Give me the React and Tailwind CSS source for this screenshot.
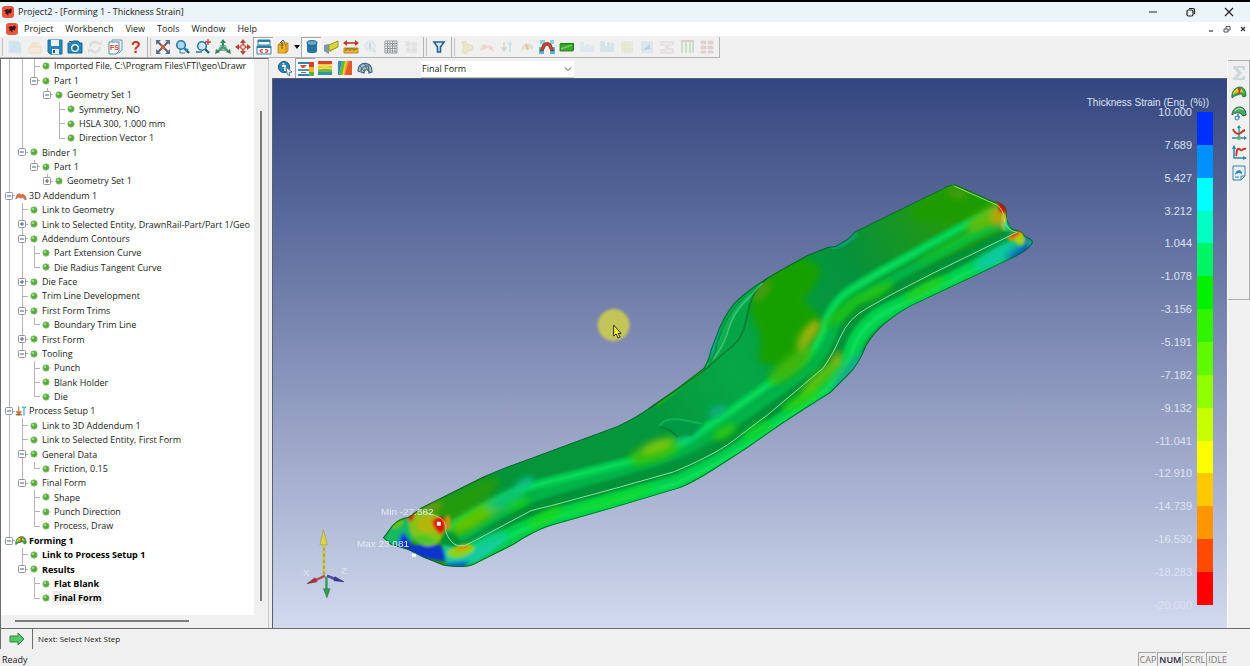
import { useState } from 'react';

const treeRows = [
  { d: 2, label: 'Imported File, C:\\Program Files\\FTI\\geo\\Drawr' },
  { d: 2, box: '-', label: 'Part 1' },
  { d: 3, box: '-', label: 'Geometry Set 1' },
  { d: 4, label: 'Symmetry, NO' },
  { d: 4, label: 'HSLA 300, 1.000 mm' },
  { d: 4, label: 'Direction Vector 1' },
  { d: 1, box: '-', label: 'Binder 1' },
  { d: 2, box: '-', label: 'Part 1' },
  { d: 3, box: '+', label: 'Geometry Set 1' },
  { d: 0, box: '-', icon: 'addendum', label: '3D Addendum 1' },
  { d: 1, label: 'Link to Geometry' },
  { d: 1, box: '+', label: 'Link to Selected Entity, DrawnRail-Part/Part 1/Geo' },
  { d: 1, box: '-', label: 'Addendum Contours' },
  { d: 2, label: 'Part Extension Curve' },
  { d: 2, label: 'Die Radius Tangent Curve' },
  { d: 1, box: '+', label: 'Die Face' },
  { d: 1, label: 'Trim Line Development' },
  { d: 1, box: '-', label: 'First Form Trims' },
  { d: 2, label: 'Boundary Trim Line' },
  { d: 1, box: '+', label: 'First Form' },
  { d: 1, box: '-', label: 'Tooling' },
  { d: 2, label: 'Punch' },
  { d: 2, label: 'Blank Holder' },
  { d: 2, label: 'Die' },
  { d: 0, box: '-', icon: 'process', label: 'Process Setup 1' },
  { d: 1, label: 'Link to 3D Addendum 1' },
  { d: 1, label: 'Link to Selected Entity, First Form' },
  { d: 1, box: '-', label: 'General Data' },
  { d: 2, label: 'Friction, 0.15' },
  { d: 1, box: '-', label: 'Final Form' },
  { d: 2, label: 'Shape' },
  { d: 2, label: 'Punch Direction' },
  { d: 2, label: 'Process, Draw' },
  { d: 0, box: '-', icon: 'forming', label: 'Forming 1', bold: true },
  { d: 1, label: 'Link to Process Setup 1', bold: true },
  { d: 1, box: '-', label: 'Results', bold: true },
  { d: 2, label: 'Flat Blank', bold: true },
  { d: 2, label: 'Final Form', bold: true },
];

const legendLabels = [
  '10.000', '7.689', '5.427', '3.212', '1.044', '-1.078', '-3.156', '-5.191',
  '-7.182', '-9.132', '-11.041', '-12.910', '-14.739', '-16.530', '-18.283', '-20.000',
];

const legendColors = [
  'bg-[#0030ff]', 'bg-[#0090ff]', 'bg-[#00ffff]', 'bg-[#00ffc0]', 'bg-[#00f464]',
  'bg-[#00f000]', 'bg-[#30f400]', 'bg-[#60fa00]', 'bg-[#90ff00]', 'bg-[#c8ff00]',
  'bg-[#ffff00]', 'bg-[#ffc800]', 'bg-[#ff9600]', 'bg-[#ff4b00]', 'bg-[#ff0000]',
];

const icons = {
  newFile: <path d="M2 2h9l3 3v9H2z" fill="#cfe3ee" stroke="#dbe9f1" />,
  open: <><path d="M2 8l3-5h6l1 3h2v8H2z" fill="#f1e6d2" /><path d="M2 8h12v6H2z" fill="#f4ead8" stroke="#ecdfc8" /></>,
  save: <><path d="M1 1h14v14H3l-2-2z" fill="#2a86b8" stroke="#1f6c98" /><path d="M4 1h8v6H4z" fill="#e9f2f7" /><path d="M5 10h7v5H5z" fill="#e3edf2" /><path d="M6 11h2v3H6z" fill="#1f5d84" /></>,
  camera: <><path d="M1 4h3l2-2h5l2 2h2v10H1z" fill="#2585b5" stroke="#1b6790" /><circle cx="8" cy="9" r="4" fill="#dff0f8" /><circle cx="8" cy="9" r="2.6" fill="#236f9b" /><path d="M2 2h3v1H2z" fill="#185b83" /></>,
  refresh: <><path d="M3 8a5 5 0 0 1 9-3M13 8a5 5 0 0 1-9 3" fill="none" stroke="#d8e0d9" strokeWidth="2.4" /><path d="M10 6h5V2zM6 10H1v4z" fill="#d8e0d9" /></>,
  fs: <><path d="M5 1h10v10l-3 3H5z" fill="#e8f1f5" stroke="#6d99b1" /><path d="M2 3h10v9l-3 3H2z" fill="#f7fafb" stroke="#5a8ba6" /><text x="3" y="11" fontSize="7" fontWeight="700" fill="#d5472c" fontFamily="Liberation Sans, sans-serif">FS</text></>,
  help: <text x="4" y="14" fontSize="16" fontWeight="700" fill="#bb3b26" fontFamily="Liberation Sans, sans-serif">?</text>,
  fit: <><path d="M2 2l12 12M14 2L2 14" stroke="#5a5f63" strokeWidth="1.8" /><path d="M1 1h5L1 6zM15 1v5l-5-5zM1 15v-5l5 5zM15 15h-5l5-5z" fill="#56738a" /><path d="M6 6h4v4H6z" fill="#d45a3c" /></>,
  zoomWin: <><circle cx="6" cy="6" r="4.3" fill="#a9d7ec" stroke="#2b7ca8" strokeWidth="1.6" /><path d="M9 9l5 5" stroke="#1e5f86" strokeWidth="2.4" /><path d="M5 9v5h5" fill="none" stroke="#2b7ca8" /><path d="M8 9l6 1-3 3z" fill="#2d8ab8" /></>,
  zoomIn: <><circle cx="7" cy="7" r="4.3" fill="#cfe7f2" stroke="#2b7ca8" strokeWidth="1.6" /><path d="M10 10l4 4" stroke="#1e5f86" strokeWidth="2.4" /><path d="M13 0v6M10 3h6" stroke="#c63f28" strokeWidth="1.3" /><path d="M1 13h6" stroke="#2b7ca8" strokeWidth="1.6" /></>,
  rotate: <><path d="M8 1v7M8 8l-6 5M8 8l6 5" stroke="#2d7e59" strokeWidth="1.8" /><path d="M5 4l3-4 3 4zM0 15l1-5 4 3zM16 15l-1-5-4 3z" fill="#2f8660" /><path d="M5 6h6l2 6H3z" fill="#53a47f" opacity=".7" /></>,
  pan: <><path d="M8 2v12M2 8h12" stroke="#c4513b" strokeWidth="1.6" /><path d="M8 0l3 4H5zM8 16l3-4H5zM0 8l4-3v6zM16 8l-4-3v6z" fill="#b84632" /><path d="M6 6h4v4H6z" fill="#f6e7e3" stroke="#c4513b" /></>,
  views: <><path d="M2 1h12v5H2z" fill="#fff" stroke="#2b7ca8" /><path d="M2 1h12v2H2z" fill="#2b7ca8" /><path d="M1 7h14v8H1z" fill="#fff" stroke="#2b7ca8" /><path d="M1 7h14v2H1z" fill="#2b7ca8" /><path d="M4 12a2 2 0 0 1 3-1M9 11a2 2 0 0 1 3 1M4 12a2 2 0 0 0 3 1M9 13a2 2 0 0 0 3-1" fill="none" stroke="#c4412c" strokeWidth="1.3" /></>,
  cube: <><path d="M3 6l2-2h8v8l-2 2H3z" fill="#f0b21f" stroke="#b08422" strokeWidth=".8" /><path d="M3 6h8v8M11 6l2-2" fill="none" stroke="#a37a1e" strokeWidth=".8" /><path d="M7 10V3M5 4l3-3 2 3" fill="none" stroke="#5a5240" /></>,
  cylinder: <><path d="M3 4v8c0 3 10 3 10 0V4z" fill="#2675a0" /><ellipse cx="8" cy="4" rx="5" ry="2.4" fill="#63adcf" stroke="#1f5f86" /></>,
  section: <><path d="M1 9l14-7v6l-8 5z" fill="#c3c52d" /><path d="M1 6l5-1v10l-5-3z" fill="#7c9aa3" /><path d="M6 6l9-4v6l-9 4z" fill="#d9d53f" stroke="#9c9b32" /></>,
  measure: <><path d="M2 4h12" stroke="#b93a27" strokeWidth="1.6" /><path d="M0 4l4-3v6zM16 4l-4-3v6z" fill="#b93a27" /><path d="M1 9h14v5H1z" fill="#e8b23b" stroke="#bd8a25" /><path d="M3 9v3M5 9v2M7 9v3M9 9v2M11 9v3M13 9v2" stroke="#7f6020" /></>,
  infoOff: <><circle cx="7" cy="7" r="5" fill="#e3ebef" stroke="#cfdce3" /><path d="M7 4v6" stroke="#c3d2db" strokeWidth="2" /><path d="M9 8l5 5-3 1z" fill="#d2dce1" /></>,
  grid: <><path d="M2 2h12v12H2z" fill="#fff" /><path d="M2 2h12v12H2zM4.500 2v12M7 2v12M9.500 2v12M12 2v12M2 4.500h12M2 7h12M2 9.500h12M2 12h12" fill="none" stroke="#96999c" /></>,
  gridOff: <><path d="M2 2h5v5H2zM9 3h5v4H9zM3 9h4v5H3zM8 8h6v6H8z" fill="#e0e0e0" /><path d="M5 5h6v6H5z" fill="#e9e9e9" stroke="#d6d6d6" /></>,
  filter: <path d="M3 3h10L9.500 8v5h-3V8z" fill="#d9ecf6" stroke="#1f628e" strokeWidth="1.6" />,
  blobOff: <path d="M3 3l4-1 1 3 6 2-1 4-4 1-2 3-4-2 2-4z" fill="#e6e5bd" stroke="#dad9b4" />,
  archOff: <path d="M1 12c2-8 5-8 7-5 3-2 6 0 7 5l-4-1c-1-3-2-3-4-1-2 0-3 1-6 2z" fill="#ecd2c6" />,
  processOff: <><path d="M5 3v8M3 9l2 3 2-3z" stroke="#d5cfca" fill="#d5cfca" strokeWidth="1.5" /><path d="M11 13V3M9 5h4" stroke="#cbdfe8" strokeWidth="2" /></>,
  gaugeOff: <><path d="M2 13c0-9 8-11 12-6v4c-3-2-4-2-5 0l-3-1c-2 0-3 1-4 3z" fill="#dce0bc" /><path d="M7 5l2 6" stroke="#dfb4a6" strokeWidth="2" /></>,
  arch: <><path d="M0 8h5v7H0zM11 8h5v7h-5z" fill="#58b8dd" /><path d="M1 1h5v4H1zM11 1h4v4h-4z" fill="#8fcfe6" /><path d="M1 12l2-4c0-6 10-6 10 0l2 4h-3l-2-4c0-2-4-2-4 0l-2 4z" fill="#ba4a31" stroke="#7f2e20" strokeWidth=".7" /></>,
  blank: <><path d="M1 5l1-1h13v7l-1 1H1z" fill="#23901a" /><path d="M1 5h13v7H1z" fill="#39ad2b" stroke="#197413" strokeWidth=".8" /><path d="M2 10l11-4" stroke="#6fce5e" strokeWidth="1.5" /></>,
  toolAOff: <path d="M1 3h4v4h2V5h3v4h1V6h4v7H1z" fill="#dae8ee" />,
  toolBOff: <path d="M1 2h5v5h2V3h3v4h1V4h3v9H1z" fill="#cfe2eb" />,
  meshOff: <><path d="M2 2h12v12H2z" fill="#e9ead0" /><path d="M2 6h12M2 10h12M6 2v12M10 2v12" stroke="#dfe0c6" /></>,
  pageOff: <><path d="M2 2h12v12H2z" fill="#d6e5ed" /><path d="M4 11l7-6v5z" fill="#aacbdb" /></>,
  squeezeOff: <path d="M2 3h12v3H9v4h5v4H2v-3h5V6H2z" fill="#f1ebea" stroke="#dccdcb" />,
  barsOff: <><path d="M3 3v11M7 3v11M11 3v11M14 3v11" stroke="#b7d6b4" strokeWidth="1.6" /><path d="M2 2h13" stroke="#d8b9b2" strokeWidth="1.6" /></>,
  tilesOff: <path d="M2 2h5v3H2zM9 2h5v3H9zM2 7h5v3H2zM9 7h5v3H9zM2 12h5v2H2zM9 12h5v2H9z" fill="#dec8c8" stroke="#d6c3c5" strokeWidth=".6" />,
  info: <><circle cx="7" cy="7" r="5.600" fill="#2e82ad" stroke="#1c5b7f" /><path d="M5 6h3v5M6.500 3v1.500" stroke="#e6f3fa" strokeWidth="1.8" fill="none" /><path d="M9 7l6 5-3 .5 1 3-2-.5-1-2z" fill="#fff" stroke="#32617d" strokeWidth=".8" /></>,
  contour: <><path d="M1 1h14v14H1z" fill="#fff" /><path d="M0 1h11v2H0zM0 13h11v2H0z" fill="#2b84b1" /><path d="M2 4h7L6 7H4z" fill="#d05236" /><path d="M0 8h11v2H0z" fill="#3aa0ad" /><path d="M3 11h5v1H3z" fill="#d05236" /><path d="M11 1h5v5h-5z" fill="#d6402a" /><path d="M11 6h5v5h-5z" fill="#f0b32a" /><path d="M11 11h5v4h-5z" fill="#5bb04b" /></>,
  bands: <><path d="M1 1h14v4H1z" fill="#d5442c" /><path d="M1 4h14v4H1z" fill="#f1c52d" /><path d="M1 8h14v4H1z" fill="#74b93e" /><path d="M1 12h14v3H1z" fill="#2a9a9c" /><path d="M1 5l7 1 7-1M1 9l7-1 7 1" fill="none" stroke="#fbe88a" /></>,
  spectrum: <><path d="M1 1h14v14H1z" fill="#f0ca2d" /><path d="M1 1h4L2 15H1z" fill="#2f8cc9" /><path d="M5 1h3L5 15H2z" fill="#62b746" /><path d="M11 1h4v14h-7z" fill="#e2592c" /><path d="M10 1h2L8 15H7z" fill="#f0932c" /></>,
  shell: <><path d="M1 11C1 5 6 2 11 4c3 1 4 5 4 8l-3 1c0-3-2-4-4-3l-1 3-3-1z" fill="#a8c0cd" stroke="#41647a" strokeWidth="1.1" /><path d="M4 11c0-3 3-5 7-5M7 3l3 6M3 6l4 5M11 4l1 8" fill="none" stroke="#41647a" /></>,
  sigma: <path d="M2 1h12v4h-2l-1-2H7l4 5-4 5h4l1-2h2v4H2v-2l5-5-5-5z" fill="#cdd8d9" />,
  forming: <><path d="M1 13C0 6 5 2 9 2c4 0 6 4 6 9l-3 1c-1-3-3-4-5-2-2 0-4 1-6 3z" fill="#3ba648" stroke="#1f6a38" strokeWidth=".8" /><path d="M2 8c2-4 5-5 8-5l3 5c-4-2-8-1-11 2z" fill="#e3cf2f" /><path d="M7 3h3L8 11z" fill="#ce3a1f" /></>,
  dome: <><path d="M1 10C1 4 6 2 9 2c4 0 6 4 6 8l-3 1c-2-4-8-4-11-1z" fill="#47a861" stroke="#28634a" /><path d="M4 6c2-3 6-3 8-1" fill="none" stroke="#a7dcae" strokeWidth="1.5" /><path d="M7 9v5M4 12h5" stroke="#2b7ca8" strokeWidth="1.4" /><circle cx="6" cy="13" r="2" fill="#e5f3fa" stroke="#2b7ca8" /></>,
  axes: <><path d="M8 1v12M1 13h14" stroke="#2b86a8" strokeWidth="1.3" /><path d="M6 3l2-3 2 3zM13 11l3 2-3 2z" fill="#2b86a8" /><path d="M2 4c2 5 5 5 6 5s3-3 6-4" fill="none" stroke="#bf3a30" strokeWidth="2" /><circle cx="8" cy="13" r="2" fill="#58b08a" /></>,
  graph: <><path d="M3 1v12h12" fill="none" stroke="#2b86a8" strokeWidth="1.5" /><path d="M1 4l2-4 2 4zM12 11l4 2-4 2z" fill="#2b86a8" /><path d="M5 11c1-2 0-6 2-7s2 2 4 1 2-2 4-1" fill="none" stroke="#c93d2e" strokeWidth="2" /></>,
  report: <><path d="M2 1h12v10l-4 4H2z" fill="#e4f0f6" stroke="#3d84a7" /><path d="M4 10c0-5 5-6 7-3v2c-3-2-5-1-7 1z" fill="#2e88b4" /><path d="M4 12h4M10 15v-4h4" fill="none" stroke="#3d84a7" /></>,
  addendum: <path d="M1 12c1-7 5-9 7-5 3-3 6 0 7 6l-3-1c-1-3-2-3-4-1-2-2-4-2-7 1z" fill="#d4764e" stroke="#a44e30" strokeWidth=".8" />,
  process: <><path d="M5 2v8M2 9l3 4 3-4z" fill="#c5793c" stroke="#c5793c" strokeWidth="1.6" /><path d="M1 13h8" stroke="#8a5630" strokeWidth="1.6" /><path d="M12 14V3M9 3h6" stroke="#62b5dc" strokeWidth="2" /></>,
  arrow: <path d="M1 5h8V2l6 6-6 6v-3H1z" fill="#55c767" stroke="#35884a" />,
  app: <><rect x="0" y="0" width="16" height="16" rx="4" fill="#ea5540" /><path d="M3 6l4-2 2 1 3-2 1 3-1 4-3-1-1 4-2-3-2 1 1-3z" fill="#3a1515" /></>,
};

const Icon = ({ name, className = 'size-4' }) => (
  <svg viewBox="0 0 16 16" className={`${className} ${name.endsWith('Off') ? 'opacity-80' : ''}`} aria-hidden="true">
    {icons[name]}
  </svg>
);

const toolGroups = [
  [
    ['newFile', 'New'], ['open', 'Open'], ['save', 'Save'], ['camera', 'Snapshot'],
    ['refresh', 'Refresh'], ['fs', 'FormingSuite'], ['help', 'Help'],
  ],
  [
    ['fit', 'Fit view'], ['zoomWin', 'Zoom window'], ['zoomIn', 'Zoom'], ['rotate', 'Rotate'], ['pan', 'Pan'],
    ['views', 'Link views', true], ['cube', 'Standard views'], ['drop', 'More views'], ['cylinder', 'Shaded', true],
    ['section', 'Section'], ['measure', 'Measure'], ['infoOff', 'Query'], ['grid', 'Grid'], ['gridOff', 'Mesh'],
  ],
  [['filter', 'Filter']],
  [
    ['blobOff', 'Geometry'], ['archOff', 'Addendum'], ['processOff', 'Process'], ['gaugeOff', 'Forming'],
    ['arch', 'Springback'], ['blank', 'Blank'], ['toolAOff', 'Progressive die'], ['toolBOff', 'Line die'],
    ['meshOff', 'Nesting'], ['pageOff', 'Report'], ['squeezeOff', 'Compare'], ['barsOff', 'Cost'], ['tilesOff', 'Tiles'],
  ],
];

const resultTools = [['info', 'Query result'], ['contour', 'Legend', true], ['bands', 'Bands'], ['spectrum', 'Smooth'], ['shell', 'Mesh']];

const sideTools = [
  ['sigma', 'Summary'], ['forming', 'Formability'], ['dome', 'Safety zone'],
  ['axes', 'Forming limit diagram'], ['graph', 'Graph'], ['report', 'Report'],
];

const ToolButton = ({ name, label, pressed }) => {
  if (name === 'drop') {
    return (
      <button type="button" aria-label={label} className="w-2 h-5 flex items-center justify-center">
        <svg viewBox="0 0 6 4" className="w-1.5 h-1"><path d="M0 0h6L3 4z" fill="#111" /></svg>
      </button>
    );
  }
  return (
    <button
      type="button"
      aria-label={label}
      className={`w-5 h-5 flex items-center justify-center ${pressed ? 'bg-[#f8f8f8] border-t border-l border-[#a5a5a5]' : ''}`}
    >
      <Icon name={name} />
    </button>
  );
};

// true when the vertical guide of this level goes on below the row
const continues = (index, level) => {
  for (let i = index + 1; i < treeRows.length; i++) {
    if (treeRows[i].d < level) return false;
    if (treeRows[i].d === level) return true;
  }
  return false;
};

const TreeRow = ({ row, index, selected, onSelect }) => (
  <li className="flex flex-1 min-h-3 items-stretch whitespace-nowrap" role="treeitem" aria-selected={selected}>
    {Array.from({ length: row.d + 1 }, (_, level) => {
      const own = level === row.d;
      const goesOn = continues(index, level);
      return (
        <span key={level} className={`relative flex shrink-0 justify-end ${level % 2 ? 'w-[13px]' : 'w-3'}`}>
          <span className="flex w-1.5 flex-col">
            <span className={`flex-1 border-[#b4b4b4] ${own ? 'border-l border-b' : goesOn ? 'border-l' : ''}`}></span>
            <span className={`flex-1 border-[#b4b4b4] ${goesOn ? 'border-l' : ''}`}></span>
          </span>
          {own && row.box && (
            <button
              type="button"
              aria-label={(row.box === '-' ? 'Collapse ' : 'Expand ') + row.label}
              className="absolute inset-0 flex items-center justify-center"
            >
              <svg viewBox="0 0 8 8" className="size-2">
                <rect x=".5" y=".5" width="7" height="7" rx="1" fill="#fff" stroke="#8f959b" />
                <path d={row.box === '-' ? 'M2 4h4' : 'M2 4h4M4 2v4'} stroke="#4b5a78" />
              </svg>
            </button>
          )}
        </span>
      );
    })}
    <span className="flex w-3 shrink-0 items-center justify-center">
      {row.icon ? (
        <Icon name={row.icon} className="size-3" />
      ) : (
        <svg viewBox="0 0 8 8" className="size-2">
          <circle cx="4" cy="4" r="3.200" fill="#55a83a" stroke="#8cc07a" strokeWidth=".8" />
          <circle cx="3.200" cy="3" r="1.200" fill="#a5dc84" />
        </svg>
      )}
    </span>
    <button
      type="button"
      onClick={onSelect}
      className={`flex items-center px-0.5 text-left ${row.bold ? 'font-bold text-black' : ''} ${selected ? 'bg-[#f0f0f0]' : ''}`}
    >
      {row.label}
    </button>
  </li>
);

const silhouette =
  'M382 538 L391 526 Q398 518 408 517 L420 508 L482 477 L503 468 L533 457 L617 426 Q636 417 648 408 L677 388 L703 368 Q708 360 710 350 L717 332 Q722 318 732 305 Q742 293 768 277 L787 266 L807 255 L827 247 L835 246 L847 239 L855 231 L947 186 Q952 183 957 185 L993 201 Q1003 202 1006 209 L1007 217 Q1008 226 1013 229 Q1022 230 1025 236 Q1035 240 1032 244 Q1027 252 1008 260 L977 275 L947 289 L913 305 Q899 312 887 322 Q874 332 866 346 Q858 366 848 375 L830 393 L803 410 L780 425 L747 448 L713 470 Q694 482 680 488 L613 508 L550 526 Q532 532 513 545 L473 565 Q464 569 443 566 L423 558 L407 550 L390 545 Z';
const shoulder =
  'M446 529 L493 503 Q512 492 540 484 L620 464 Q660 454 682 443 L728 413 L766 386 L805 359 Q816 348 823 330 Q830 303 852 289 L880 272 L965 225 L1003 209';
const ridge =
  'M458 538 L500 514 Q520 501 548 492 L625 470 Q668 458 690 447 L735 421 L775 394 L812 367 Q824 353 832 333 Q840 308 862 296 L890 280 L970 237 L1008 221';
const bead =
  'M445 532 Q449 543 457 546 Q464 547 470 543 L530 511 Q540 508 550 506 L620 487 L673 472 Q705 459 727 445 L767 415 L823 368 Q834 352 840 337 Q848 318 867 308 L890 295 L933 273 L1017 232';
const flange =
  'M462 560 L520 531 L552 518 L622 499 L677 483 Q708 469 732 455 L775 426 L828 388 Q848 369 853 348 Q860 328 882 314 L907 302 L947 283 L1022 245';

const Spot = ({ x, y, rx, ry, r = -28, c, o = 1 }) => (
  <ellipse cx={x} cy={y} rx={rx} ry={ry} fill={c} opacity={o} transform={`rotate(${r} ${x} ${y})`} />
);

const PartView = () => (
  <svg
    viewBox="272 79 955 549"
    className="absolute inset-0 size-full"
    role="img"
    aria-label="Thickness strain plot"
    fontFamily="Liberation Sans, Arial, sans-serif"
    fontSize="10"
  >
    <defs>
      <clipPath id="part"><path d={silhouette} /></clipPath>
      <filter id="soft" x="-50%" y="-50%" width="200%" height="200%"><feGaussianBlur stdDeviation="3.500" /></filter>
      <filter id="fine" x="-10%" y="-10%" width="120%" height="120%"><feGaussianBlur stdDeviation="1.500" /></filter>
      <linearGradient id="top" gradientUnits="userSpaceOnUse" x1="420" y1="520" x2="960" y2="200">
        <stop offset="0" stopColor="#2f9a10" />
        <stop offset=".14" stopColor="#06943a" />
        <stop offset=".4" stopColor="#05973d" />
        <stop offset=".55" stopColor="#06a746" />
        <stop offset=".8" stopColor="#05923c" />
        <stop offset="1" stopColor="#2b9b08" />
      </linearGradient>
    </defs>

    <g clipPath="url(#part)">
      <path d={silhouette} fill="url(#top)" />
      <g filter="url(#soft)">
        <path d="M908 212 L950 180 L1010 205 L965 220 Q935 226 915 219 Z" fill="#1d9c04" />
        <path d="M768 270 L800 258 Q822 262 820 275 Q812 290 802 300 Q830 320 815 335 L795 360 Q770 372 757 358 Q765 340 753 320 Q745 305 755 290 Z" fill="#14a004" />
        <path d="M410 515 L482 480 L500 478 L490 495 L445 525 Z" fill="#249b0a" />
        <Spot x={424} y={512} rx={18} ry={5} c="#6f9d0c" />
        <Spot x={760} y={290} rx={12} ry={6} c="#4b9a10" r={-50} />
        <Spot x={956} y={193} rx={9} ry={4} c="#4a9c0b" r={15} />
      </g>

      <g fill="none" filter="url(#fine)">
        <path d={bead} stroke="#069239" strokeWidth="16" />
        <path d={ridge} stroke="#05b447" strokeWidth="9" />
        <path d={shoulder} stroke="#06cb50" strokeWidth="10" />
        <path d={shoulder} stroke="#0adc5c" strokeWidth="3" />
        <path d={flange} stroke="#05cf4b" strokeWidth="17" />
        <path d={flange} stroke="#07df58" strokeWidth="5" />
      </g>

      <g filter="url(#soft)">
        <path d="M450 524 L475 508 L500 496 L505 508 L470 530 L455 536 Z" fill="#5ec406" />
        <Spot x={524} y={483} rx={11} ry={4} c="#0cc595" />
        <Spot x={505} y={500} rx={20} ry={7} c="#10c26e" />
        <Spot x={517} y={504} rx={14} ry={4} c="#14cc10" />
        <path d="M628 455 L655 440 L674 436 L678 450 L665 458 L635 466 Z" fill="#35bd08" />
        <Spot x={656} y={446} rx={16} ry={5} c="#7dc708" r={-20} />
        <Spot x={688} y={434} rx={13} ry={5} c="#0bc183" />
        <Spot x={717} y={411} rx={10} ry={5} c="#0cb590" o={0.8} />
        <Spot x={724} y={432} rx={13} ry={5} c="#2fc808" />
        <Spot x={790} y={366} rx={26} ry={9} c="#3cb607" r={-38} />
        <Spot x={808} y={335} rx={18} ry={7} c="#8fb409" r={-55} />
        <Spot x={812} y={328} rx={9} ry={3} c="#b3ac0c" r={-55} />
        <Spot x={845} y={310} rx={26} ry={5} c="#24c00a" r={-40} />
        <Spot x={875} y={292} rx={20} ry={5} c="#27c60b" />
        <Spot x={960} y={240} rx={50} ry={4} c="#18c227" />
        <Spot x={988} y={217} rx={24} ry={8} c="#62bc0a" />
        <Spot x={998} y={216} rx={7} ry={11} c="#b9a30b" r={0} />
        <Spot x={820} y={378} rx={28} ry={6} c="#5dc408" r={-42} />
        <Spot x={836} y={358} rx={8} ry={3} c="#b4b90c" r={-60} />
        <Spot x={849} y={373} rx={26} ry={7} c="#12a88d" r={-52} />
        <Spot x={800} y={400} rx={20} ry={5} c="#2dd009" />
        <Spot x={925} y={288} rx={24} ry={4} c="#2fcd16" />
        <Spot x={757} y={430} rx={16} ry={5} c="#12d52b" />
        <Spot x={610} y={500} rx={50} ry={4} c="#10dc2b" r={-16} />
        <Spot x={545} y={517} rx={20} ry={4} c="#22d60c" />
        <Spot x={480} y={547} rx={30} ry={8} c="#0bcf8b" />
        <Spot x={1000} y={254} rx={30} ry={8} c="#0cc9a2" />
        <Spot x={1020} y={251} rx={17} ry={5} c="#1067b8" />
      </g>

      {/* left end */}
      <g filter="url(#fine)">
        <path d="M380 540 L392 526 L408 517 L416 535 L402 552 Z" fill="#12b862" />
        <path d="M383 540 L395 545 L402 530 L406 548 Z" fill="#0a8cb5" />
        <path d="M403 533 L412 545 L440 545 L448 562 L420 558 L396 546 Z" fill="#0a35cc" />
        <path d="M442 545 L470 550 L510 536 L475 562 L446 567 Z" fill="#14cba0" />
        <path d="M445 563 L470 561 L462 567 L445 566 Z" fill="#0c66cc" />
        <path d="M408 518 Q414 508 432 514 Q445 517 444 531 Q438 548 424 546 Q407 540 408 518 Z" fill="#83c513" />
        <Spot x={428} y={524} rx={13} ry={8} c="#b5b611" r={0} />
        <Spot x={423} y={540} rx={11} ry={4} c="#4dc62c" r={10} />
        <path d="M407 520 Q407 511 416 510 L411 522 Z" fill="#d61806" />
        <path d="M431 521 Q440 513 444 520 Q446 530 440 535 Q433 531 431 521 Z" fill="#e00a06" />
        <Spot x={447} y={523} rx={3} ry={8} c="#c9930f" r={0} />
        <Spot x={460} y={551} rx={14} ry={6} c="#8fd40c" r={-15} />
        <Spot x={462} y={548} rx={7} ry={2} c="#e0860c" r={-15} />
        <Spot x={396} y={524} rx={7} ry={4} c="#5fc514" />
      </g>

      {/* right end */}
      <g filter="url(#fine)">
        <path d="M996 199 L1008 205 L1006 217 L999 210 Z" fill="#d80d08" />
        <Spot x={1004} y={222} rx={3} ry={9} c="#d9c010" r={0} />
        <path d="M1003 222 L1009 218 L1012 232 L1003 230 Z" fill="#18c878" />
        <Spot x={1016} y={236} rx={9} ry={4} c="#dba80d" r={-20} />
        <Spot x={1014} y={235} rx={5} ry={2} c="#df3108" r={-25} />
        <Spot x={1020} y={240} rx={5} ry={5} c="#a8d010" r={0} />
        <path d="M1023 248 L1025 236 L1034 240 L1026 252 L1008 261 Z" fill="#0b62b8" />
        <Spot x={1030} y={243} rx={4} ry={5} c="#189c90" r={0} />
      </g>

      {/* side flap */}
      <path d="M768 277 Q750 293 748 310 L743 330 Q738 343 720 356 L700 373 L648 408 L677 388 L703 368 L717 332 Q722 310 743 293 Z" fill="#05a546" />
      <path d="M712 358 L725 325 Q733 308 750 295" fill="none" stroke="#0bb558" strokeWidth="5" filter="url(#fine)" />
      <path d="M709 355 L719 325" stroke="#159dad" strokeWidth="4" filter="url(#fine)" />
      <path d="M655 405 L700 371" stroke="#43b90b" strokeWidth="3" filter="url(#fine)" />
      <path d="M768 277 Q750 293 748 310 L743 330 Q738 343 727 350 L703 371 L650 408" fill="none" stroke="#085a26" />
      <path d="M706 367 Q722 350 727 332 Q732 315 742 304 L762 283" fill="none" stroke="#7fe39a" strokeWidth=".9" />
      <path d="M705 369 Q715 358 716 345 Q724 315 745 296" fill="none" stroke="#08652b" strokeWidth=".8" />

      {/* raised lip in the middle of the rail */}
      <path d="M658 426 Q662 416 680 419 L703 424 L692 436 L676 437 Q672 427 658 426 Z" fill="#069a43" filter="url(#fine)" />
      <path d="M659 426 Q664 417 682 420 L702 424" fill="none" stroke="#0fb455" strokeWidth="2" />
      <path d="M659 427 Q670 429 677 437" fill="none" stroke="#06702d" strokeWidth="1.200" />
      <path d="M830 247 Q845 245 856 233" fill="none" stroke="#14a07a" strokeWidth="5" filter="url(#fine)" />

      <path d={bead} fill="none" stroke="#9de8ae" strokeWidth=".9" />
      <path d="M445 532 Q447 520 435 516 L415 509" fill="none" stroke="#c9d59b" strokeWidth=".8" />
      <path d="M952 185 L997 205 Q1004 210 1004 220 Q1006 230 1016 232" fill="none" stroke="#b3e59b" strokeWidth=".8" />
      <path d={silhouette} fill="none" stroke="#065c2b" strokeWidth="2" opacity=".8" />
    </g>

    <path d="M436 522h4v4h-4zM411 554h4v3h-4z" fill="#fff" />
    <g fill="#e4e8f4">
      <text x="380" y="515">Min -27.582</text>
      <text x="356" y="547">Max 23.081</text>
    </g>

    <circle cx="613" cy="325" r="16" fill="#d2d04c" opacity=".85" filter="url(#fine)" />
    <path d="M613 325v11l2.500-2 2 4 2-1-2-3.500h3z" fill="#f5ee3a" stroke="#33331a" />

    {/* coordinate triad */}
    <g>
      <path d="M323 575V545" stroke="#c9c65a" strokeWidth="3" />
      <path d="M322.500 530l4 15h-7.500z" fill="#d9d64c" stroke="#9a983e" strokeWidth=".6" />
      <path d="M323 575v-30" stroke="#7d7c3a" strokeDasharray="3 3" strokeWidth=".8" />
      <path d="M324 576l-11 5" stroke="#b54e5b" strokeWidth="2.500" />
      <path d="M306 584l8-6 2 4z" fill="#a83344" stroke="#7f2d3a" strokeWidth=".6" />
      <path d="M326 576l10 4" stroke="#4d4f9e" strokeWidth="2.500" />
      <path d="M343 582l-9-5-1 4z" fill="#3b3c96" stroke="#2c2d73" strokeWidth=".6" />
      <path d="M325.500 577v12" stroke="#3b9a5d" strokeWidth="2.500" />
      <path d="M326 598l-3.500-9h6.500z" fill="#2f9a50" stroke="#237340" strokeWidth=".6" />
      <g fill="#dfe4f3">
        <text x="302" y="576">X</text>
        <text x="340" y="574">Z</text>
      </g>
    </g>
  </svg>
);

const Legend = () => (
  <div className="absolute top-4 right-[14px] bottom-[23px] flex flex-col items-end font-['Liberation_Sans',Arial,sans-serif] text-[11px] text-[#dde2f2]">
    <h2 className="mr-1 h-[17px] text-[10px] leading-4">Thickness Strain (Eng. (%))</h2>
    <div className="flex flex-1 gap-[5px]">
      <ol className="-my-1.5 flex flex-col justify-between text-right leading-3">
        {legendLabels.map((l) => <li key={l}>{l}</li>)}
      </ol>
      <div className="flex w-4 flex-col">
        {legendColors.map((c) => <span key={c} className={`flex-1 ${c}`}></span>)}
      </div>
    </div>
  </div>
);

const App = () => {
  const [selected, setSelected] = useState(treeRows.length - 1);
  const [form, setForm] = useState('Final Form');

  return (
    <div className="flex h-screen min-h-[600px] flex-col bg-[#f0f0f0] font-['Open_Sans','Noto_Sans',sans-serif] text-[9px] text-[#1b1b1b]">
      <header>
        <div className="flex h-[22px] items-center border-t-2 border-black bg-[#ebf4f8] pl-0.5">
          <Icon name="app" className="size-3" />
          <h1 className="ml-1 flex-1 text-[9px]">Project2 - [Forming 1 - Thickness Strain]</h1>
          <div className="flex pr-0.5">
            <button type="button" aria-label="Minimize" className="flex w-[38px] justify-center">
              <svg viewBox="0 0 10 10" className="size-2.5"><path d="M1 5h8" stroke="#222" /></svg>
            </button>
            <button type="button" aria-label="Restore" className="flex w-[38px] justify-center">
              <svg viewBox="0 0 10 10" className="size-2.5" fill="none" stroke="#222" strokeWidth="1.200"><rect x="1" y="3" width="6" height="6" rx="1.500" /><path d="M3 1.500h4q1.500 0 1.500 1.500v4" /></svg>
            </button>
            <button type="button" aria-label="Close" className="flex w-[38px] justify-center">
              <svg viewBox="0 0 10 10" className="size-2.5"><path d="M1 1l8 8M9 1L1 9" stroke="#222" strokeWidth="1.200" /></svg>
            </button>
          </div>
        </div>
        <div className="flex h-[14px] items-center bg-white pl-1.5">
          <Icon name="app" className="size-3" />
          <nav className="ml-1.5 flex flex-1 gap-3">
            {['Project', 'Workbench', 'View', 'Tools', 'Window', 'Help'].map((m) => (
              <button type="button" key={m}>{m}</button>
            ))}
          </nav>
          <div className="flex gap-0.5">
            <button type="button" aria-label="Minimize document" className="flex w-[14px] justify-center">
              <svg viewBox="0 0 8 8" className="size-2"><path d="M2 6h4" stroke="#333" strokeWidth="1.200" /></svg>
            </button>
            <button type="button" aria-label="Restore document" className="flex w-[14px] justify-center">
              <svg viewBox="0 0 8 8" className="size-2" fill="none" stroke="#444" strokeWidth=".9"><path d="M1 4h4v3H1zM3 4V1.500h4V5H5" /></svg>
            </button>
            <button type="button" aria-label="Close document" className="flex w-[14px] justify-center">
              <svg viewBox="0 0 8 8" className="size-2"><path d="M2 2l4 4M6 2L2 6" stroke="#333" strokeWidth="1.200" /></svg>
            </button>
          </div>
        </div>
        <div className="flex h-[22px] items-center">
          {toolGroups.map((group, i) => (
            <div key={i} className="flex items-center border-r border-b border-[#b4b4b4] pr-0.5">
              <span className="ml-0.5 mr-px h-[18px] w-0.5 border-l border-[#c0c0c0]"></span>
              {group.map(([name, label, pressed]) => (
                <ToolButton key={name} name={name} label={label} pressed={pressed} />
              ))}
            </div>
          ))}
        </div>
      </header>

      <main className="flex min-h-0 flex-1">
        <aside className="flex w-[269px] shrink-0 flex-col border-t border-l border-[#6d6d6d] border-r border-r-[#c9c9c9]">
          <div className="flex min-h-0 flex-1">
            <ul role="tree" aria-label="Project tree" className="flex flex-1 flex-col overflow-hidden bg-white pl-0.5 pb-[10px]">
              {treeRows.map((row, i) => (
                <TreeRow key={i} row={row} index={i} selected={selected === i} onSelect={() => setSelected(i)} />
              ))}
            </ul>
            <div className="flex w-[14px] flex-col items-center pt-[52px] pb-[14px]">
              <span className="w-0.5 flex-1 bg-[#7c7c7c]"></span>
            </div>
          </div>
          <div className="h-[13px] pl-[14px] pt-[5px]">
            <span className="block h-0.5 w-[174px] bg-[#7c7c7c]"></span>
          </div>
        </aside>

        <div className="flex min-w-0 flex-1 flex-col pl-[3px]">
          <div className="flex h-5 items-center pl-[3px]">
            {resultTools.map(([name, label, pressed]) => (
              <ToolButton key={name} name={name} label={label} pressed={pressed} />
            ))}
            <label className="relative ml-[46px] flex self-end">
              <span className="sr-only">Stage</span>
              <select
                value={form}
                onChange={(e) => setForm(e.target.value)}
                className="h-[17px] w-[153px] appearance-none border-b border-[#c4c4c4] bg-white pl-px text-[9px] leading-4"
              >
                <option>Final Form</option>
                <option>Flat Blank</option>
              </select>
              <svg viewBox="0 0 8 8" className="pointer-events-none absolute right-0.5 top-1 size-2"><path d="M1 2.500l3 3 3-3" fill="none" stroke="#444" /></svg>
            </label>
          </div>
          <section className="relative flex-1 border-t border-l border-[#5a5f72] bg-linear-to-b from-[#34467f] via-[#828eb6] to-[#d2daee]">
            <PartView />
            <Legend />
          </section>
        </div>

        <aside className="flex w-[23px] shrink-0 flex-col border-l border-white">
          <div className="mt-0.5 flex h-[240px] flex-col items-center border-t border-r border-b border-[#adadad] pt-0.5">
            {sideTools.map(([name, label]) => (
              <ToolButton key={name} name={name} label={label} />
            ))}
          </div>
        </aside>
      </main>

      <footer>
        <div className="flex h-[21px] items-stretch border-t border-[#6d6d6d]">
          <button type="button" aria-label="Next" className="flex w-[33px] items-center justify-center border-l border-r border-[#6d6d6d]">
            <Icon name="arrow" />
          </button>
          <p className="self-center pl-[5px] text-[8px]">Next: Select Next Step</p>
        </div>
        <div className="flex h-[17px] items-end pr-[23px] pl-0.5">
          <p className="flex-1">Ready</p>
          <ul className="flex gap-px text-[#7b7b7b]">
            {['CAP', 'NUM', 'SCRL', 'IDLE'].map((k) => (
              <li key={k} className={`border-t border-l border-[#a5a5a5] pl-px ${k === 'NUM' ? 'font-semibold text-[#1c2340]' : ''}`}>{k}</li>
            ))}
          </ul>
        </div>
      </footer>
    </div>
  );
};

export default App;
